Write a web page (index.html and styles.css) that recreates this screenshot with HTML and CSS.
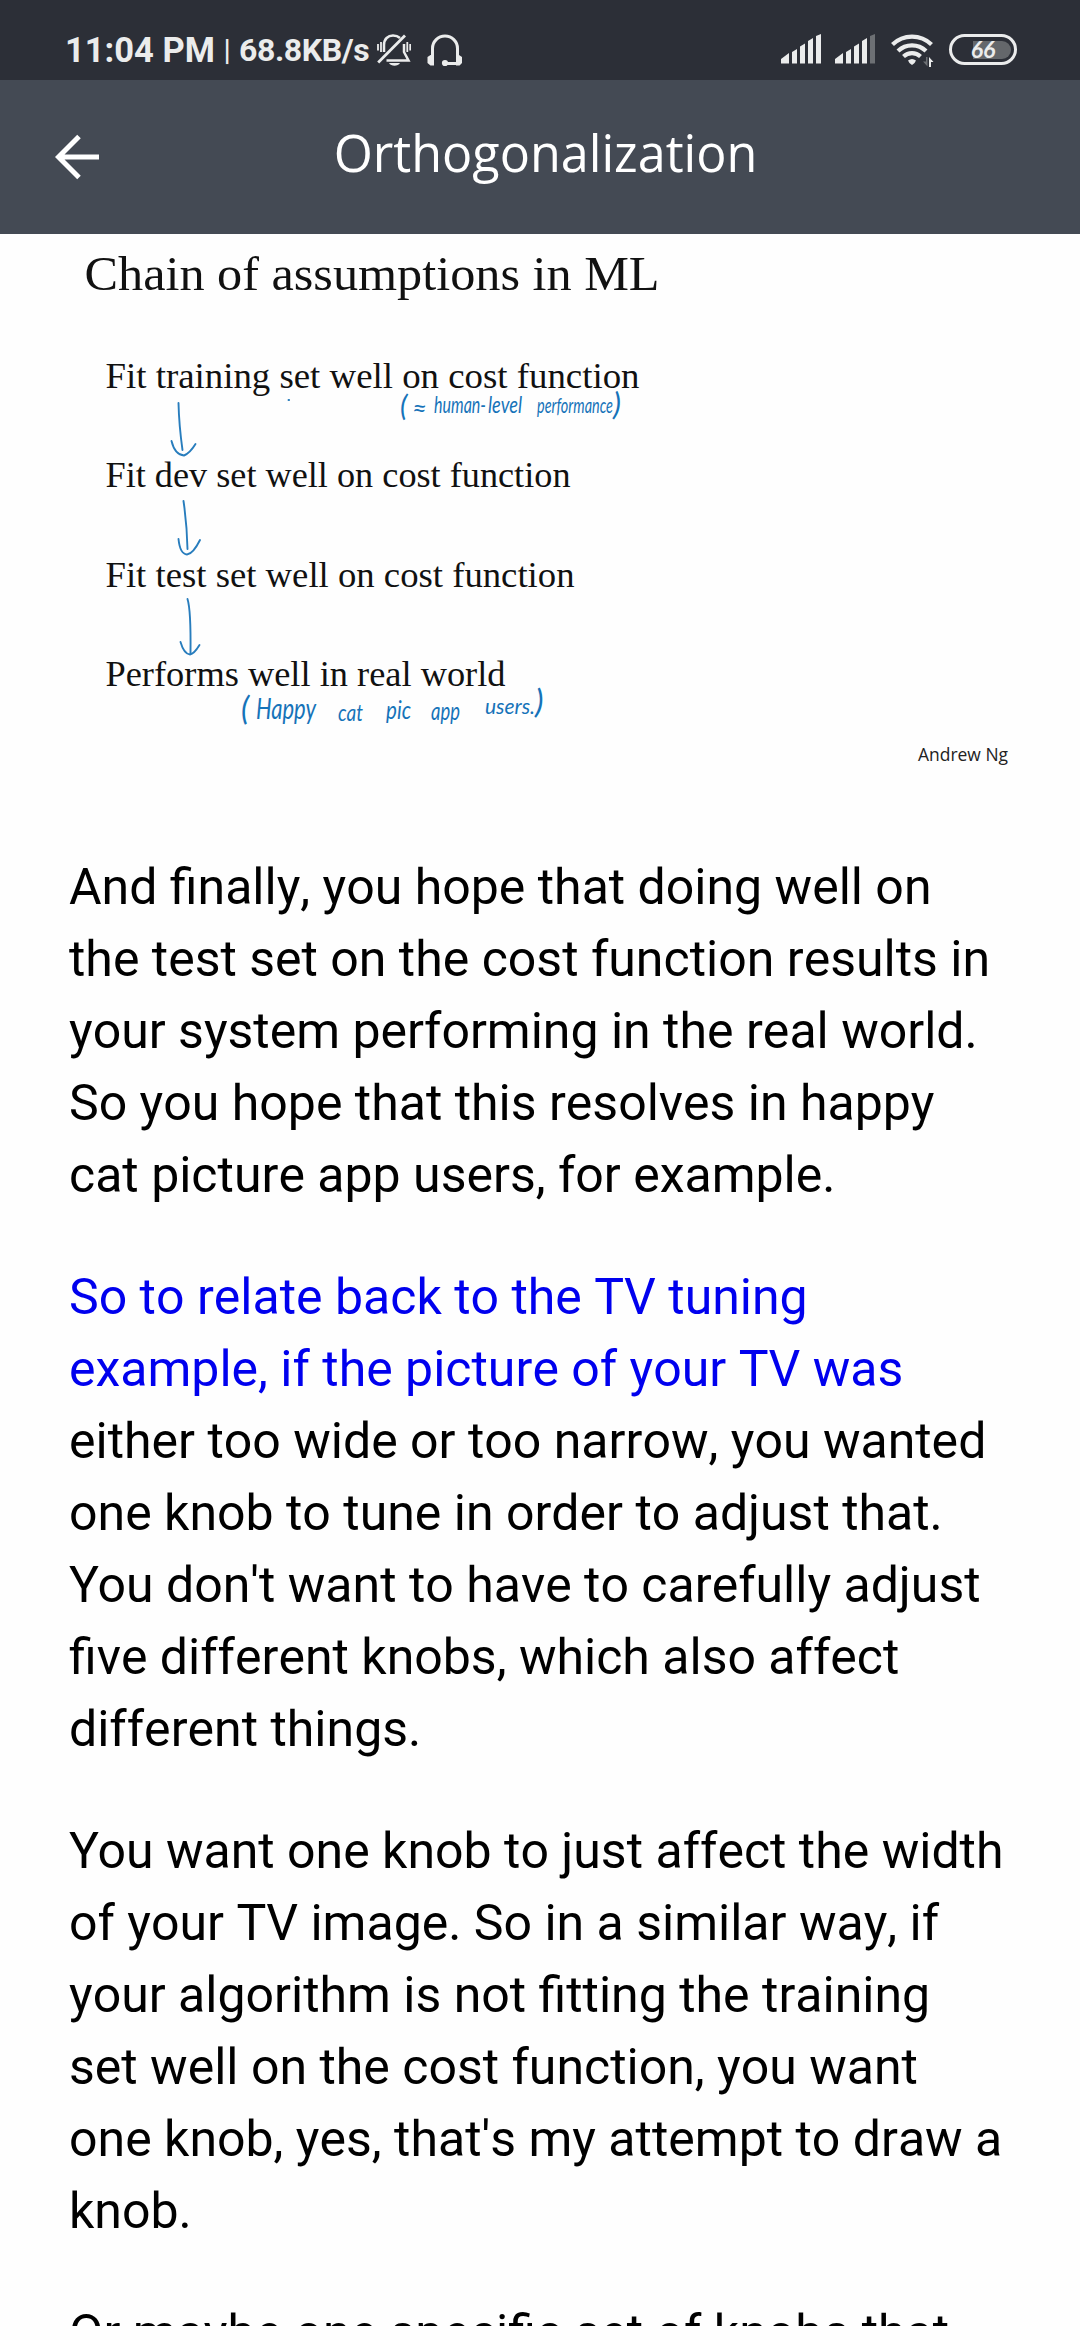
FILE: index.html
```html
<!DOCTYPE html>
<html lang="en">
<head>
<meta charset="utf-8">
<title>Orthogonalization</title>
<link rel="stylesheet" href="styles.css">
</head>
<body>
<div class="screen">
  <div class="status">
    <div class="status-left">
      <span class="clock">11:04 PM</span><span class="divider">|</span><span class="speed">68.8KB/s</span>
      <svg class="bell" width="34" height="34" viewBox="0 0 34 34" fill="none" stroke="#ebecec" stroke-width="2.5">
        <path d="M7 18V11C7 5 11 1.500 16 1.500c3 0 5 .7 7 2.500M27 10v8l4.500 8.500H9.500"/><path d="M1.200 28.500L28 1.500" stroke-width="2.800"/>
        <path d="M1 10v6.500M4 8v10M30.300 8v10M33.200 10v6.500" stroke-width="1.800"/>
        <path d="M12 29h11c-2 3.700-9 3.700-11 0z" fill="#ebecec" stroke="none"/>
      </svg>
      <svg class="headset" width="36" height="34" viewBox="0 0 36 34" fill="none" stroke="#ebecec" stroke-width="3">
        <path d="M5.500 25V14.500a12.500 12.500 0 0 1 25 0V25M19 29.500h11"/>
        <path d="M7 21v10.500H3.500L.5 29v-6l3-2zM29 21v10.500h3.500l2.500-2.500v-6l-3-2z" fill="#ebecec" stroke="none"/>
        <circle cx="18" cy="29" r="3.100" fill="#ebecec" stroke="none"/>
      </svg>
    </div>
    <div class="status-right">
      <svg width="40" height="30" viewBox="0 0 40 30" fill="#ebecec">
        <path d="M0 25l8-6v10.500H0zM11 18l5-3v14.500h-5zM19 12.500l5-3v20h-5zM27 7l5-3v25.500h-5zM35 2l5-2v29.500h-5z"/>
      </svg>
      <svg class="signal-two" width="40" height="30" viewBox="0 0 40 30" fill="#ebecec">
        <path d="M0 25l8-6v10.500H0zM11 18l5-3v14.500h-5zM19 12.500l5-3v20h-5zM27 7l5-3v25.500h-5z"/><path d="M35 2l5-2v29.500h-5z" fill="#6d7074"/>
      </svg>
      <svg class="wifi" width="43" height="34" viewBox="0 0 43 34" fill="none" stroke="#ebecec" stroke-width="4.200">
        <path d="M1.500 10.500a28 28 0 0 1 39 0M7 17a20 20 0 0 1 28 0M12.500 22.500a12.500 12.500 0 0 1 17 0"/>
        <path d="M17 26.500q4-3 8 0-1 3-4 4.500-3-1.500-4-4.500z" fill="#ebecec" stroke="none"/>
        <path d="M36.500 23v9.500l-4.500-5h3V23z" fill="#6d7074" stroke="none"/><path d="M38 33V23l4.500 5H40v5z" fill="#ebecec" stroke="none"/>
      </svg>
      <div class="battery"><span class="charge"></span><span class="percent">66</span></div>
    </div>
  </div>
  <header class="appbar">
    <svg class="back" width="44" height="46" viewBox="0 0 44 46" fill="none" stroke="#fff" stroke-width="5"><path d="M24 2.500L3.500 23 24 43.500M4 23h40"/></svg>
    <h1>Orthogonalization</h1>
  </header>
  <main class="content">
    <svg class="slide" width="1080" height="608" viewBox="0 234 1080 608">
      <g class="print">
        <text x="84.500" y="290" font-size="48" textLength="575" lengthAdjust="spacingAndGlyphs">Chain of assumptions in ML</text>
        <g font-size="35">
          <text x="105.500" y="387.500" textLength="534" lengthAdjust="spacingAndGlyphs">Fit training set well on cost function</text>
          <text x="105.500" y="487" textLength="465" lengthAdjust="spacingAndGlyphs">Fit dev set well on cost function</text>
          <text x="105.500" y="586.500" textLength="469" lengthAdjust="spacingAndGlyphs">Fit test set well on cost function</text>
          <text x="105.500" y="685.500" textLength="400" lengthAdjust="spacingAndGlyphs">Performs well in real world</text>
        </g>
      </g>
      <text class="credit" x="918" y="761" textLength="90" lengthAdjust="spacingAndGlyphs">Andrew Ng</text>
      <g class="arrows">
        <path d="M178.500 403Q179 425 182.500 450M171.500 441Q175 455 184 455.500Q190 453 195.500 444"/>
        <path d="M183.500 501Q187 525 187.500 549M178.500 539Q180 554 187 554.500Q193 554 200 540"/>
        <path d="M187.500 599Q191 610 190.500 653M180.500 642Q184 654 190 654.500Q194 654 199.500 645"/>
        <path d="M288.500 400h.600"/>
      </g>
      <g class="pen">
        <text x="400" y="416" font-size="29">(</text>
        <text x="412" y="417" font-size="25" textLength="15" lengthAdjust="spacingAndGlyphs">≈</text>
        <text x="434" y="413" font-size="23" textLength="52" lengthAdjust="spacingAndGlyphs">human-</text>
        <text x="488" y="413" font-size="24" textLength="34" lengthAdjust="spacingAndGlyphs">level</text>
        <text x="537" y="413" font-size="21" textLength="76" lengthAdjust="spacingAndGlyphs">performance</text>
        <text x="613" y="415" font-size="31">)</text>
        <text x="241" y="720" font-size="32">(</text>
        <text x="256" y="719" font-size="28" textLength="60" lengthAdjust="spacingAndGlyphs">Happy</text>
        <text x="338" y="721" font-size="23" textLength="25" lengthAdjust="spacingAndGlyphs">cat</text>
        <text x="386" y="719" font-size="25" textLength="25" lengthAdjust="spacingAndGlyphs">pic</text>
        <text x="431" y="720" font-size="25" textLength="29" lengthAdjust="spacingAndGlyphs">app</text>
        <text x="485" y="714" font-size="22" textLength="50" lengthAdjust="spacingAndGlyphs">users.</text>
        <text x="535" y="713" font-size="33">)</text>
      </g>
    </svg>
    <article>
      <p>And finally, you hope that doing well on<br>the test set on the cost function results in<br>your system performing in the real world.<br>So you hope that this resolves in happy<br>cat picture app users, for example.</p>
      <p><span class="spoken">So to relate back to the TV tuning<br>example, if the picture of your TV was</span><br>either too wide or too narrow, you wanted<br>one knob to tune in order to adjust that.<br><span class="kerned">You</span> don't want to have to carefully adjust<br>five different knobs, which also affect<br>different things.</p>
      <p><span class="kerned">You</span> want one knob to just affect the width<br>of your TV image. So in a similar way, if<br>your algorithm is not fitting the training<br>set well on the cost function, you want<br>one knob, yes, that's my attempt to draw a<br>knob.</p>
      <p>Or maybe one specific set of knobs that</p>
    </article>
  </main>
</div>
</body>
</html>
```
FILE: styles.css
```css
* { box-sizing: border-box; }
body { margin: 0; background: #fefefe; }
svg { display: block; flex: none; }
.screen { width: 1080px; height: 2340px; display: flex; flex-direction: column; overflow: hidden; padding-bottom: 14px; font-family: Roboto, sans-serif; background: #fefefe; }
.status { flex: none; height: 80px; background: #2c2f37; color: #ebecec; display: flex; justify-content: space-between; padding: 34px 63px 0 65px; }
.status-left, .status-right { display: flex; align-items: flex-start; white-space: nowrap; }
.status-left { font-weight: 700; line-height: 33px; }
.clock { width: 150px; font-size: 34.5px; }
.divider { width: 24px; font-size: 29px; font-weight: 500; text-align: center; }
.speed { width: 132px; font-size: 32px; letter-spacing: -0.4px; }
.bell { margin-left: 6px; }
.headset { margin-left: 16px; }
.signal-two { margin-left: 14px; }
.wifi { margin-left: 16px; }
.battery { margin-left: 15px; width: 68px; height: 31px; border: 3px solid #ebecec; border-radius: 16px; display: grid; align-items: center; justify-items: center; }
.charge, .percent { grid-area: 1 / 1; }
.charge { width: 38px; height: 18px; background: #64676b; border-radius: 0 9px 9px 0; justify-self: end; margin-right: 3px; }
.percent { font: italic 700 23px/25px Lato, sans-serif; }
.appbar { flex: none; height: 154px; background: #444a54; color: #fff; display: grid; grid-template-columns: 44px 1fr 44px; padding: 0 44px 0 55px; align-items: center; }
.appbar h1 { margin: 0; padding-bottom: 9px; text-align: center; font: 400 50.3px/68px "Open Sans", sans-serif; }
.content { flex: 1; min-height: 0; overflow: hidden; }
.print { font-family: "Liberation Serif", serif; fill: #111; }
.credit { font-family: "Open Sans", sans-serif; font-size: 18px; fill: #222; }
.arrows { fill: none; stroke: #287dbd; stroke-width: 1.900; stroke-linecap: round; stroke-linejoin: round; }
.pen { font-family: Lato, sans-serif; font-style: italic; fill: #1673b9; }
article { padding: 9px 60px 0 69px; font-size: 50px; line-height: 72px; color: #000; white-space: nowrap; font-kerning: none; }
article p { margin: 0 0 50px; }
.spoken { color: #0000ee; }
.kerned { font-kerning: normal; }
```
